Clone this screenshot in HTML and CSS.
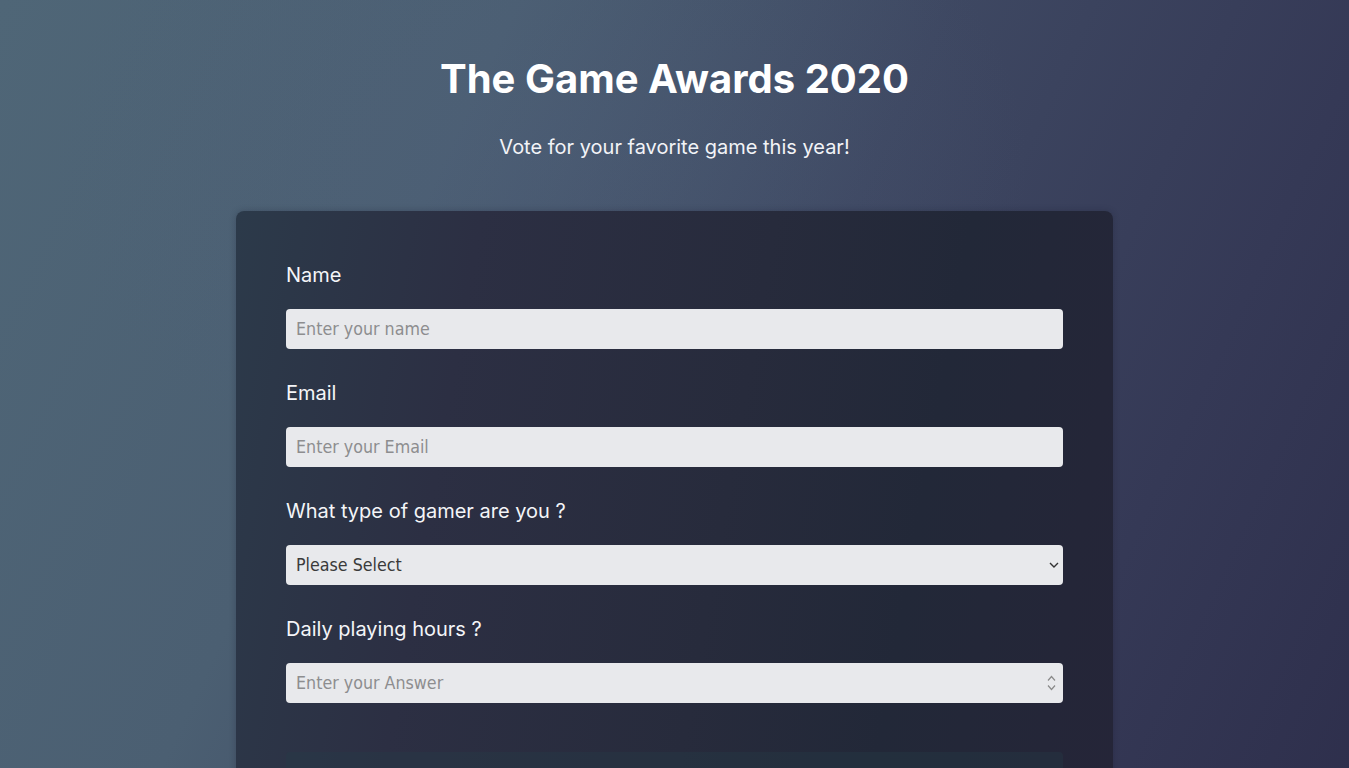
FILE: index.html
```html
<!DOCTYPE html>
<html lang="en">
<head>
<meta charset="utf-8">
<title>The Game Awards 2020</title>
<link rel="stylesheet" href="styles.css">
</head>
<body>
<main class="page">
  <header class="hero">
    <h1 class="title">The Game Awards 2020</h1>
    <p class="subtitle">Vote for your favorite game this year!</p>
  </header>
  <form class="card">
    <div class="field">
      <label class="label" for="name">Name</label>
      <input class="control" id="name" type="text" placeholder="Enter your name">
    </div>
    <div class="field">
      <label class="label" for="email">Email</label>
      <input class="control" id="email" type="email" placeholder="Enter your Email">
    </div>
    <div class="field">
      <label class="label" for="type">What type of gamer are you ?</label>
      <div class="select-wrap">
        <select class="control select" id="type">
          <option>Please Select</option>
          <option>Casual</option>
          <option>Hardcore</option>
        </select>
        <svg class="chev" width="10" height="6" viewBox="0 0 10 6"><path d="M1 1l4 4 4-4" fill="none" stroke="#333" stroke-width="1.4"/></svg>
      </div>
    </div>
    <div class="field">
      <label class="label" for="hours">Daily playing hours ?</label>
      <div class="select-wrap">
        <input class="control number" id="hours" type="number" placeholder="Enter your Answer">
        <svg class="spin" width="9" height="16" viewBox="0 0 9 16"><path d="M1 5.5l3.5-4 3.5 4M1 10.5l3.5 4 3.5-4" fill="none" stroke="#8a8a8a" stroke-width="1.2"/></svg>
      </div>
    </div>
    <div class="extra"></div>
  </form>
</main>
</body>
</html>
```

FILE: styles.css
```css
* { box-sizing: border-box; }
html, body { margin: 0; padding: 0; }
body {
  min-height: 768px;
  overflow: hidden;
  font-family: Inter, "Noto Sans", sans-serif;
  color: #fff;
  background:
    radial-gradient(ellipse 700px 500px at 40% 20%, rgba(80,95,125,0.3), rgba(80,95,125,0) 70%),
    linear-gradient(115deg, #4f6677 0%, #4b5f72 30%, #3e4862 55%, #353956 80%, #2e2f4c 100%);
}
.page {
  display: flex;
  flex-direction: column;
  align-items: center;
  padding-top: 55px;
}
.hero { text-align: center; }
.title {
  margin: 0;
  font-size: 40px;
  line-height: 48px;
  font-weight: 700;
  letter-spacing: 0;
}
.subtitle {
  margin: 32px 0 0;
  font-size: 20px;
  line-height: 24px;
  font-weight: 400;
  color: #f2f3f7;
}
.card {
  margin-top: 52px;
  width: 877px;
  padding: 52px 50px 0;
  border-radius: 8px;
  background: linear-gradient(100deg, #2c3a4a 0%, #2c2f43 25%, #272b3c 55%, #222838 75%, #252538 100%);
  box-shadow: 0 0 6px rgba(20,25,40,0.25);
  display: flex;
  flex-direction: column;
  gap: 32px;
  min-height: 600px;
}
.field {
  display: flex;
  flex-direction: column;
  gap: 22px;
}
.label {
  font-size: 20px;
  line-height: 24px;
  color: #f4f5f8;
}
.select-wrap { position: relative; }
.control {
  display: block;
  width: 100%;
  height: 40px;
  border: 0;
  border-radius: 4px;
  background: #e8e9ec;
  padding: 0 10px;
  font-family: "DejaVu Sans Condensed", "DejaVu Sans", sans-serif;
  font-size: 17.7px;
  color: #333;
  outline: none;
}
.control::placeholder { color: #8d8d8f; }
.select {
  appearance: none;
  -webkit-appearance: none;
  color: #3a3a3a;
}
.number { -moz-appearance: textfield; }
.number::-webkit-inner-spin-button,
.number::-webkit-outer-spin-button { -webkit-appearance: none; margin: 0; }
.chev {
  position: absolute;
  right: 4px;
  top: 17px;
}
.spin {
  position: absolute;
  right: 7px;
  top: 12px;
}
.extra {
  margin-top: 17px;
  height: 60px;
  border-radius: 4px;
  background: rgba(38, 60, 72, 0.35);
}
```
